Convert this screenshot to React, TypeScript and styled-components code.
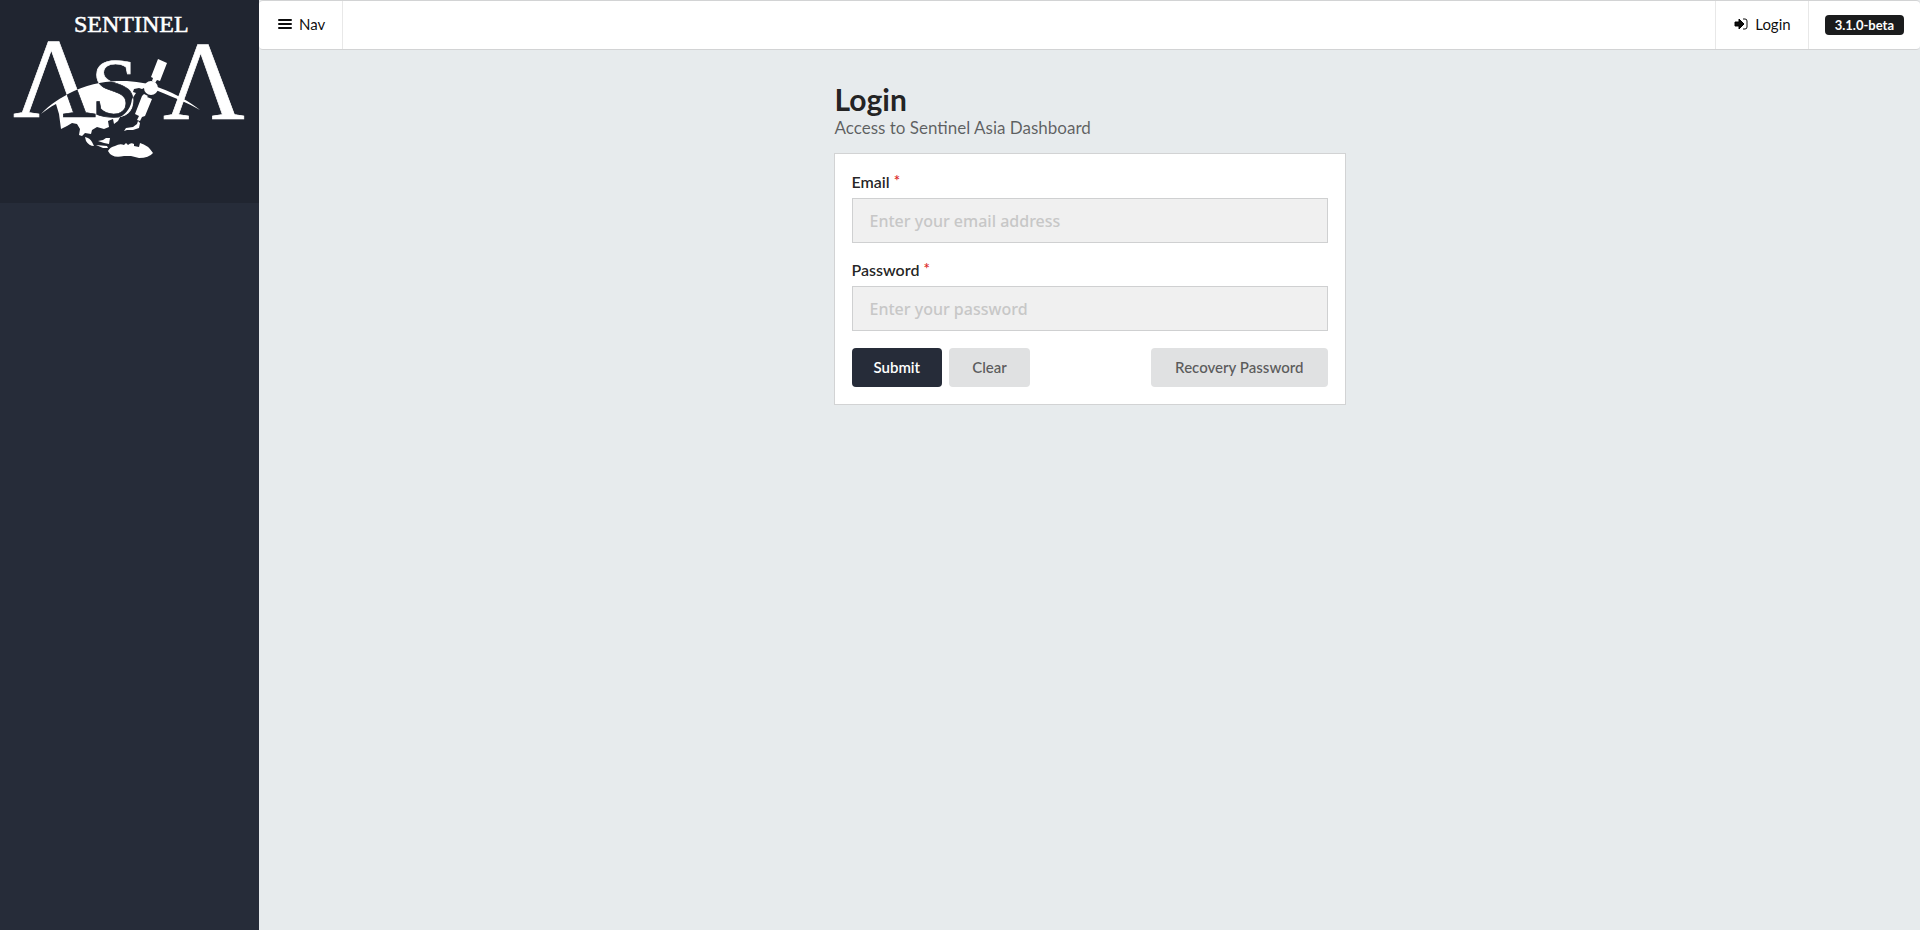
import React from "react";
import styled, { createGlobalStyle, css } from "styled-components";

const GlobalStyle = createGlobalStyle`
  *, *::before, *::after { box-sizing: border-box; }
  body {
    margin: 0;
    background: #e7ebed;
    color: rgba(0, 0, 0, 0.87);
    font-family: Lato, "Liberation Sans", sans-serif;
    font-size: 15px;
  }
`;

const Page = styled.div`
  display: flex;
  min-height: 100vh;
`;

const Sidebar = styled.aside`
  flex: 0 0 259px;
  background: #262c39;
`;

const Brand = styled.a`
  display: block;
  height: 203px;
  background: #202530;
`;

const Content = styled.div`
  flex: 1;
  min-width: 0;
`;

const TopBar = styled.nav`
  display: flex;
  height: 50px;
  background: #fff;
  border: 1px solid #d2d3d4;
  border-width: 1px 0;
  border-radius: 4px;
`;

const barItem = css`
  display: flex;
  align-items: center;
  padding: 0 17px 2px;
  border: 0 solid #e8e8e8;
  background: none;
  color: rgba(0, 0, 0, 0.95);
  font: inherit;
  line-height: 16px;
`;

const NavToggle = styled.button`
  ${barItem}
  gap: 7px;
  padding: 0 17px 2px 19px;
  border-right-width: 1px;
  cursor: pointer;
`;

const BarRight = styled.div`
  display: flex;
  margin-left: auto;
`;

const LoginLink = styled.a`
  ${barItem}
  gap: 7px;
  padding-left: 18px;
  border-width: 0 1px;
  text-decoration: none;
`;

const Version = styled.div`
  ${barItem}
  padding: 0 16px;
`;

const Badge = styled.span`
  padding: 2px 10px;
  border-radius: 4px;
  background: #1b1c1d;
  color: #fff;
  font-size: 13px;
  font-weight: 700;
`;

const Main = styled.main`
  width: 512px;
  max-width: 100%;
  margin: 0 auto;
  padding-top: 31px;
`;

const Title = styled.h1`
  margin: 0;
  padding-left: 1px;
  font-size: 30px;
  line-height: 36px;
  font-weight: 700;
`;

const Subtitle = styled.p`
  margin: 0 0 15px;
  padding-left: 1px;
  color: rgba(0, 0, 0, 0.6);
  font-size: 17px;
  line-height: 21px;
`;

const Card = styled.form`
  padding: 18px 17px 17px;
  border: 1px solid #d2d3d4;
  background: #fff;
`;

const Field = styled.div`
  margin-bottom: 17px;
`;

const Label = styled.label`
  display: block;
  height: 26px;
  font-size: 16px;
  font-weight: 600;
  line-height: 20px;
`;

const Required = styled.span`
  color: #db2828;
  font-size: 15px;
  line-height: 16px;
  vertical-align: top;
`;

const Input = styled.input`
  display: block;
  width: 100%;
  height: 45px;
  padding: 0 17px;
  border: 1px solid #cfd0d1;
  border-radius: 0;
  background: #f0f0f0;
  font-family: "Noto Sans", sans-serif;
  font-size: 16px;
  font-weight: 500;
  &::placeholder { color: #c7c7c7; opacity: 1; }
`;

const Actions = styled.div`
  display: flex;
  gap: 7px;
`;

const Button = styled.button<{ $primary?: boolean; $end?: boolean }>`
  min-width: 81px;
  height: 39px;
  padding: 0 ${(p) => (p.$end ? 24 : 22)}px 2px;
  border: 0;
  border-radius: 4px;
  background: ${(p) => (p.$primary ? "#262c39" : "#e0e1e2")};
  color: ${(p) => (p.$primary ? "#fff" : "rgba(0, 0, 0, 0.6)")};
  font: inherit;
  font-weight: 600;
  cursor: pointer;
  ${(p) => p.$end && "margin-left: auto;"}
`;

const globe =
  "M41 114 C50 104 60 98 74 91 C92 83 108 81 122 81 C135 81 148 83 160 88 C176 94 190 102 200 110 C188 103 175 98 158 91 L144 88 L142 89 L139 88 L134 89 L133 92 L136 93 L132 99 C131 107 127 113 120 117 L118 121 L114 124 L113 119 L108 121 L109 127 L104 129 L97 127 L92 130 L91 134 L85 133 L82 136 L79 135 L80 129 L77 124 L72 123 L67 126 L61 129 L59 114 L56 104 C50 107 46 110 41 114 Z";

function Logo() {
  return (
    <svg width="259" height="170" viewBox="0 0 259 170" fill="#fff" fontFamily="Liberation Serif, serif" role="img" aria-label="Sentinel Asia">
      <defs>
        <clipPath id="globe"><path d={globe} /></clipPath>
      </defs>
      <text x="74" y="32" fontSize="24" stroke="#fff" strokeWidth="0.5">SENTINEL</text>
      <g stroke="#fff" strokeWidth="0.7">
        <g id="letters">
          <text x="13" y="117" fontSize="115">Λ</text>
          <text x="91" y="117" fontSize="85">S</text>
        </g>
        <text x="163" y="119" fontSize="113">Λ</text>
      </g>
      <path d={globe} />
      <g clipPath="url(#globe)" fill="#202530" stroke="#202530" strokeWidth="0.7"><use href="#letters" /></g>
      <path d="M158 59 L167 63 L160 81 L157 80 L155 83 L152 81 L153 78 L151 77Z" />
      <circle cx="151" cy="88" r="7" />
      <path d="M144 94 L148 96 L147 97 L152 99 L145 116 L142 117 L140 121 L137 120 L139 116 L135 114 L142 96Z" />
      <path d="M138 121 L140 123 L139 128 L133 130 L127 130 L124 131 L126 128 L133 127 L137 124Z" />
      <path d="M85 137 Q90 138 92 142 L94 146 Q89 146 86 141Z M98 141 L103 140 L106 138 L110 138 L109 144 L104 143Z M96 145 L107 146 L108 148 L103 148Z" />
      <path d="M108 151 Q110 147 115 146 Q120 143 124 145 L126 143 L128 145 Q131 142 134 144 L134 146 L139 147 L140 143 Q148 145 153 153 Q149 158 139 158 L131 156 L124 156 Q112 159 108 151Z" />
    </svg>
  );
}

function MenuIcon() {
  return (
    <svg width="14" height="14" viewBox="0 0 14 14" aria-hidden="true">
      <path d="M1 3H13M1 7H13M1 11H13" stroke="currentColor" strokeWidth="2" strokeLinecap="round" />
    </svg>
  );
}

function SignInIcon() {
  return (
    <svg width="14" height="14" viewBox="0 0 14 14" aria-hidden="true">
      <path d="M1 5H5V2L10 7L5 12V9H1Z" fill="currentColor" stroke="currentColor" strokeLinejoin="round" />
      <path d="M9 2H11Q13 2 13 4V10Q13 12 11 12H9" fill="none" stroke="currentColor" />
    </svg>
  );
}

type FieldProps = { id: string; label: string; type: string; placeholder: string };

function FormField({ id, label, type, placeholder }: FieldProps) {
  return (
    <Field>
      <Label htmlFor={id}>{label} <Required>*</Required></Label>
      <Input id={id} type={type} placeholder={placeholder} required />
    </Field>
  );
}

export default function App() {
  return (
    <>
      <GlobalStyle />
      <Page>
        <Sidebar>
          <Brand href="#"><Logo /></Brand>
        </Sidebar>
        <Content>
          <TopBar>
            <NavToggle type="button"><MenuIcon />Nav</NavToggle>
            <BarRight>
              <LoginLink href="#login"><SignInIcon />Login</LoginLink>
              <Version><Badge>3.1.0-beta</Badge></Version>
            </BarRight>
          </TopBar>
          <Main>
            <Title>Login</Title>
            <Subtitle>Access to Sentinel Asia Dashboard</Subtitle>
            <Card onSubmit={(e) => e.preventDefault()} noValidate>
              <FormField id="email" label="Email" type="email" placeholder="Enter your email address" />
              <FormField id="password" label="Password" type="password" placeholder="Enter your password" />
              <Actions>
                <Button $primary type="submit">Submit</Button>
                <Button type="reset">Clear</Button>
                <Button $end type="button">Recovery Password</Button>
              </Actions>
            </Card>
          </Main>
        </Content>
      </Page>
    </>
  );
}
